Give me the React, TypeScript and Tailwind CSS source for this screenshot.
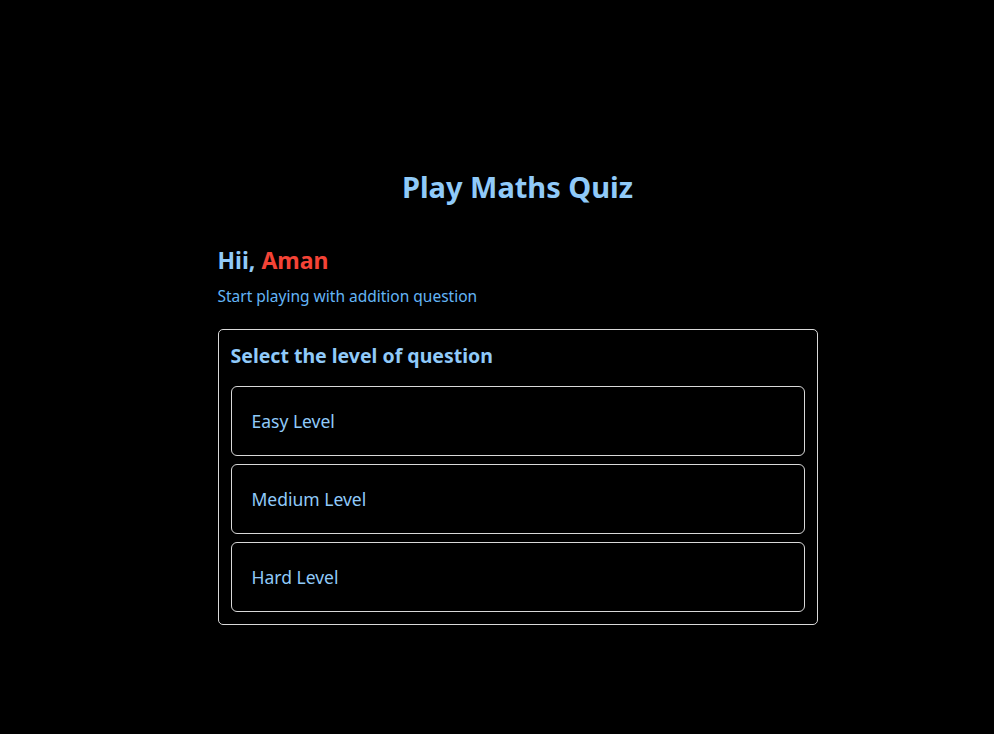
export default function App() {
  const levels = ["Easy Level", "Medium Level", "Hard Level"];
  return (
    <div className="min-h-[734px] bg-black font-['Noto_Sans',sans-serif] pl-[41px] flex justify-center">
      <div className="w-[600px] pt-[168px]">
        <h1 className="text-center text-[29px] leading-[38px] font-bold text-[#90caf9]">Play Maths Quiz</h1>
        <h2 className="mt-[38px] text-[23px] leading-[32px] font-bold text-[#90caf9]">
          Hii, <span className="text-[#f44336]">Aman</span>
        </h2>
        <p className="mt-[10px] text-[15.5px] leading-[20px] text-[#64b5f6]">Start playing with addition question</p>
        <div className="mt-[23px] border border-[#d9d9d9] rounded-[5px] px-[12px] pt-[13px] pb-[12px]">
          <h3 className="text-[19.5px] leading-[26px] font-bold text-[#90caf9]">Select the level of question</h3>
          <div className="mt-[17px] flex flex-col gap-[8px]">
            {levels.map((l) => (
              <button
                key={l}
                className="h-[70px] w-full text-left px-[20px] border border-[#d9d9d9] rounded-[6px] text-[17.5px] text-[#90caf9] bg-black"
              >
                {l}
              </button>
            ))}
          </div>
        </div>
      </div>
    </div>
  );
}
